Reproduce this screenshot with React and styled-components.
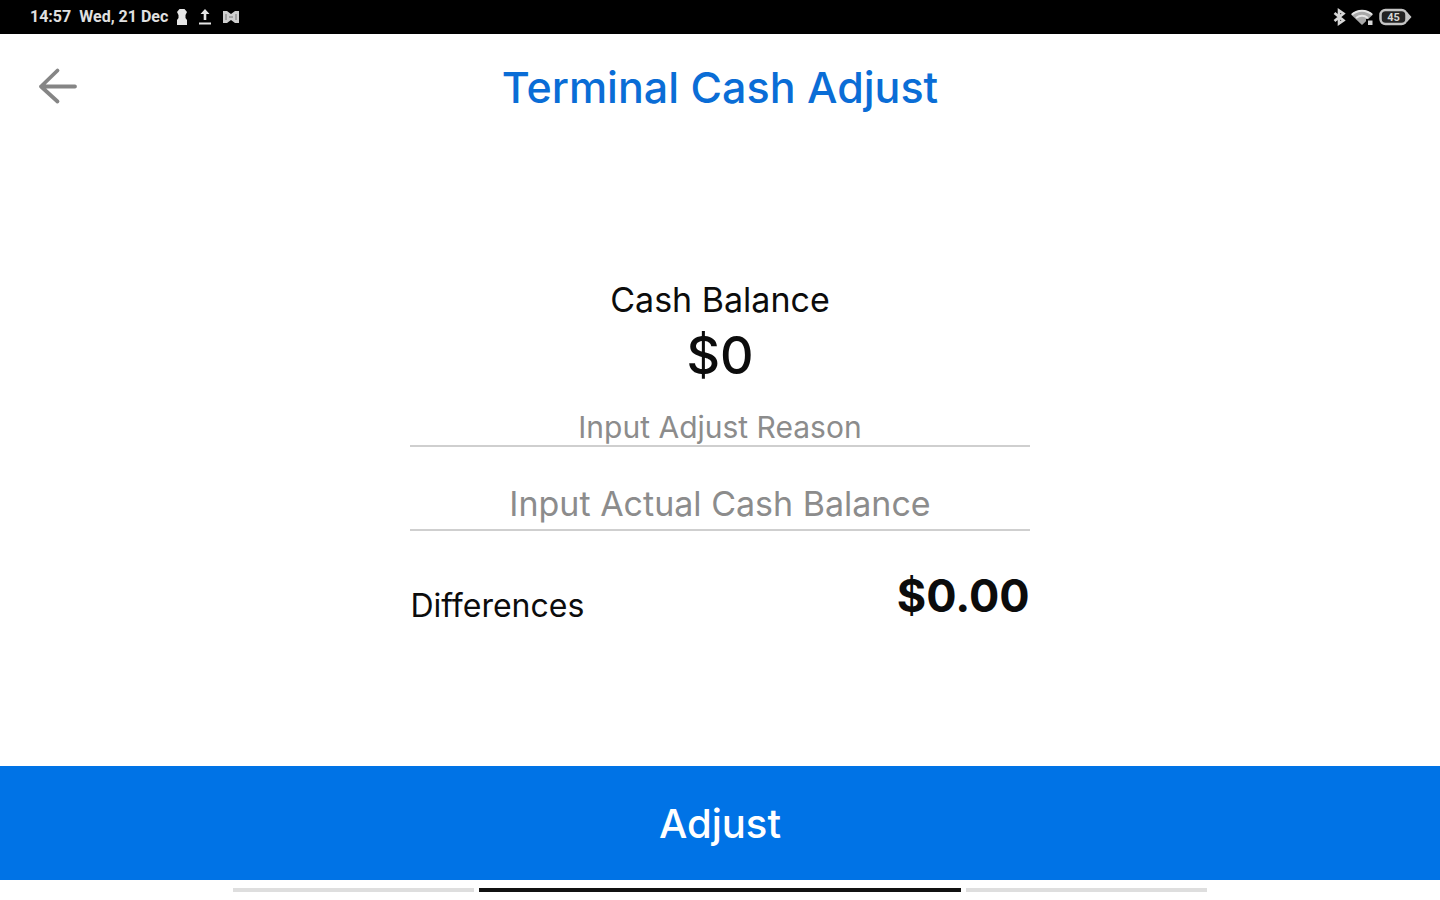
import React, { useState } from "react";
import styled, { createGlobalStyle } from "styled-components";

const App = () => {
  const [reason, setReason] = useState("");
  const [actual, setActual] = useState("");
  const difference = Number(actual) || 0;

  return (
    <Screen>
      <GlobalStyle />
      <StatusBar>
        <StatusGroup>
          <StatusText>14:57</StatusText>
          <StatusText>Wed, 21 Dec</StatusText>
          <StatusIcons>
            <PawnIcon />
            <UploadIcon />
            <BowIcon />
          </StatusIcons>
        </StatusGroup>
        <StatusGroup $tight>
          <BluetoothIcon />
          <WifiIcon />
          <BatteryIcon />
        </StatusGroup>
      </StatusBar>
      <Header>
        <BackButton type="button" aria-label="Back">
          <svg width="40" height="40" viewBox="0 0 40 40" fill="none">
            <path
              d="M37 20.5H3M19.5 4.5L3 20.5L19.5 35.5"
              stroke="#858585"
              strokeWidth="3.8"
              strokeLinecap="round"
              strokeLinejoin="round"
            />
          </svg>
        </BackButton>
        <Title>Terminal Cash Adjust</Title>
      </Header>
      <Main>
        <Form id="adjust-form" onSubmit={e => e.preventDefault()}>
          <Label $large>Cash Balance</Label>
          <Balance>$0</Balance>
          <ReasonInput
            aria-label="Input Adjust Reason"
            placeholder="Input Adjust Reason"
            value={reason}
            onChange={e => setReason(e.target.value)}
          />
          <AmountInput
            aria-label="Input Actual Cash Balance"
            placeholder="Input Actual Cash Balance"
            inputMode="decimal"
            value={actual}
            onChange={e => setActual(e.target.value)}
          />
          <DifferenceRow>
            <Label>Differences</Label>
            <Difference>${difference.toFixed(2)}</Difference>
          </DifferenceRow>
        </Form>
      </Main>
      <AdjustButton type="submit" form="adjust-form">
        Adjust
      </AdjustButton>
      <NavHints>
        <Hint />
        <Hint $active />
        <Hint />
      </NavHints>
    </Screen>
  );
};

const PawnIcon = () => (
  <svg width="12" height="18" viewBox="0 0 12 18" fill="#e6e6e6">
    <path d="M3.5 1h5L11 4 9.500 7v3l1.500 2v5H1v-5l1.500-2V7L1 4z" />
  </svg>
);

const UploadIcon = () => (
  <svg width="14" height="18" viewBox="0 0 14 18" fill="#e6e6e6">
    <path d="M7 1l4.500 5H8.300v6H5.700V6H2.500zM1 14.500h12v2H1z" />
  </svg>
);

const BowIcon = () => (
  <svg width="18" height="18" viewBox="0 0 18 18">
    <path d="M1 3h4l4 3 4-3h4v12h-4l-4-3-4 3H1z" fill="#cfcfcf" />
    <path d="M4 6v6M14 6v6M7 9h4" stroke="#777" strokeWidth="1" />
  </svg>
);

const BluetoothIcon = () => (
  <svg width="14" height="18" viewBox="0 0 14 18" fill="none">
    <path
      d="M2.500 5l9 7.500L7 15.500V2.500l4.500 3-9 7.500"
      stroke="#d6d6d6"
      strokeWidth="2.600"
    />
  </svg>
);

const WifiIcon = () => (
  <svg width="24" height="18" viewBox="0 0 24 18" fill="none">
    <path d="M1 6.500C7 .5 17 .5 23 6.500L12 17z" fill="#a8a8a8" />
    <path
      d="M2 6.500C8 1.500 16 1.500 22 6.500M6 10c4-3 8-3 12 0"
      stroke="#e6e6e6"
      strokeWidth="2"
    />
    <path d="M16 11h6v6h-6z" fill="#000" />
    <path d="M18 12.500h4.500V17H18z" fill="#d6d6d6" />
  </svg>
);

const BatteryIcon = () => (
  <svg width="34" height="18" viewBox="0 0 34 18">
    <rect
      x="2.5"
      y="2"
      width="26"
      height="14"
      rx="5"
      fill="#222"
      stroke="#c4c4c4"
      strokeWidth="2.5"
    />
    <path d="M29 4L33.500 9L29 14z" fill="#c4c4c4" />
    <text
      x="15.5"
      y="13"
      textAnchor="middle"
      fontFamily="Roboto, sans-serif"
      fontSize="11"
      fontWeight="700"
      fill="#d6d6d6"
    >
      45
    </text>
  </svg>
);

const GlobalStyle = createGlobalStyle`
  * {
    box-sizing: border-box;
  }

  body {
    margin: 0;
    background-color: #fff;
    color: #0c0c0c;
    font-family: Inter, "Open Sans", sans-serif;
  }
`;

const Screen = styled.div`
  min-height: 100vh;
  display: flex;
  flex-direction: column;
`;

const StatusBar = styled.div`
  min-height: 34px;
  padding: 0 28px 0 30px;
  display: flex;
  align-items: center;
  justify-content: space-between;
  background-color: #000;
`;

const StatusGroup = styled.div`
  display: flex;
  align-items: center;
  gap: ${props => (props.$tight ? "4px" : "8px")};
`;

const StatusIcons = styled.div`
  display: flex;
  gap: 10px;
`;

const StatusText = styled.span`
  color: #e0e0e0;
  font-family: Roboto, sans-serif;
  font-size: 16px;
  font-weight: 700;
  line-height: 20px;
`;

const Header = styled.header`
  min-height: 103px;
  padding: 0 38px;
  display: grid;
  grid-template-columns: 40px 1fr 40px;
  align-items: center;
`;

const BackButton = styled.button`
  display: flex;
  padding: 0;
  border: none;
  background: none;
  cursor: pointer;
`;

const Title = styled.h1`
  margin: 0;
  padding-top: 2px;
  color: #0a6dd6;
  font-size: 43px;
  font-weight: 500;
  line-height: 56px;
  text-align: center;
`;

const Main = styled.main`
  flex: 1;
  display: flex;
  align-items: center;
  justify-content: center;
`;

const Form = styled.form`
  width: 43%;
  min-width: 480px;
  display: flex;
  flex-direction: column;
  align-items: stretch;
  text-align: center;
`;

const Label = styled.span`
  font-size: ${props => (props.$large ? "34px" : "32px")};
  font-weight: 400;
  line-height: ${props => (props.$large ? "40px" : "36px")};
`;

const Balance = styled.strong`
  font-size: 52px;
  font-weight: 500;
  line-height: 72px;
`;

const Field = styled.input`
  width: 100%;
  padding: 4px 0 0;
  border: none;
  border-bottom: 2px solid #cfcfcf;
  border-radius: 0;
  outline: none;
  background: none;
  color: #0c0c0c;
  font-family: inherit;
  text-align: center;

  &::placeholder {
    color: #8c8c8c;
    opacity: 1;
  }
`;

const ReasonInput = styled(Field)`
  height: 42px;
  margin-top: 13px;
  font-size: 30px;
`;

const AmountInput = styled(Field)`
  height: 56px;
  margin-top: 28px;
  font-size: 34px;
`;

const DifferenceRow = styled.div`
  margin-top: 37px;
  display: flex;
  align-items: flex-end;
  justify-content: space-between;
`;

const Difference = styled.strong`
  font-size: 45px;
  font-weight: 700;
  line-height: 56px;
`;

const AdjustButton = styled.button`
  width: 100%;
  height: 114px;
  border: none;
  background-color: #0073e6;
  color: #fff;
  font-family: inherit;
  font-size: 40px;
  font-weight: 500;
  cursor: pointer;
`;

const NavHints = styled.div`
  width: 68%;
  height: 20px;
  margin: 0 auto;
  padding: 0 3px;
  display: grid;
  grid-template-columns: 1fr 2fr 1fr;
  align-items: center;
  gap: 5px;
`;

const Hint = styled.span`
  height: 4px;
  background-color: ${props => (props.$active ? "#111" : "#dedede")};
`;

export default App;
